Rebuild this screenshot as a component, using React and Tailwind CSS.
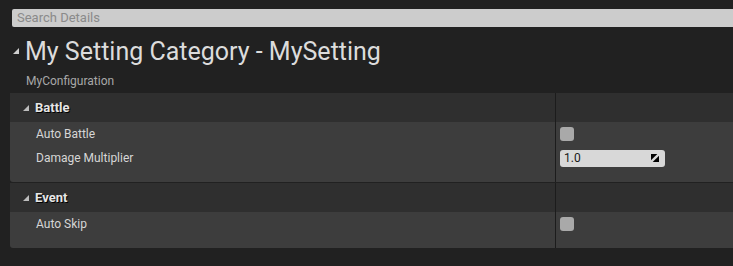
import React from "react";

const Tri = ({ className = "" }) => (
  <svg width="6" height="6" viewBox="0 0 6 6" className={className}>
    <polygon points="6,0 6,6 0,6" fill="currentColor" />
  </svg>
);

const Checkbox = () => (
  <div className="w-[14px] h-[14px] rounded-[3px] bg-[#a9a9a9]" />
);

const SpinBox = () => (
  <div className="w-[105px] h-[17px] rounded-[3px] bg-[#d8d8d8] flex items-center justify-between pl-[4px] pr-[6px]">
    <span className="text-[12px] text-[#1a1a1a] leading-none">1.0</span>
    <svg width="8" height="8" viewBox="0 0 8 8">
      <polygon points="0,0 6.3,0 0,6.3" fill="#000" />
      <polygon points="8,1.7 8,8 1.7,8" fill="#000" />
    </svg>
  </div>
);

const Row = ({ label, children }) => (
  <div className="flex h-[24px]">
    <div className="w-[545px] flex items-center pl-[26px] text-[12px] text-[#d6d6d6]">
      {label}
    </div>
    <div className="w-px bg-[#1c1c1c]" />
    <div className="flex-1 flex items-center pl-[4px]">{children}</div>
  </div>
);

const Category = ({ title, children, padBottom }) => (
  <div>
    <div className="flex h-[29px] bg-[#2f2f2f]">
      <div className="w-[545px] flex items-center pl-[13px] gap-[6px]">
        <Tri className="text-[#bdbdbd]" />
        <span className="text-[13px] font-bold text-[#e6e6e6] [text-shadow:1px_1px_0_#000]">
          {title}
        </span>
      </div>
      <div className="w-px bg-[#1c1c1c]" />
      <div className="flex-1" />
    </div>
    <div className="bg-[#3d3d3d] rounded-bl-[3px]">
      {children}
      <div className="flex" style={{ height: padBottom }}>
        <div className="w-[545px]" />
        <div className="w-px bg-[#1c1c1c]" />
        <div className="flex-1" />
      </div>
    </div>
  </div>
);

export default function App() {
  return (
    <div
      className="w-[733px] h-[266px] bg-[#212121] overflow-hidden"
      style={{ fontFamily: "Roboto, 'Liberation Sans', sans-serif" }}
    >
      <div className="pt-[9px] pl-[12px]">
        <div className="h-[18px] bg-[#cccccc] rounded-l-[2px] flex items-center pl-[5px] text-[13px] text-[#8a8a8a]">
          Search Details
        </div>
      </div>
      <div className="flex items-center h-[28px] mt-[10px] pl-[13px] gap-[6px]">
        <Tri className="text-[#cfcfcf]" />
        <span className="text-[25px] text-[#dcdcdc] leading-none">
          My Setting Category - MySetting
        </span>
      </div>
      <div className="pl-[26px] mt-[6px] h-[20px] flex items-center text-[12px] text-[#a8a8a8]">
        MyConfiguration
      </div>
      <div className="ml-[10px] mt-[2px]">
        <Category title="Battle" padBottom="12px">
          <Row label="Auto Battle">
            <Checkbox />
          </Row>
          <Row label="Damage Multiplier">
            <SpinBox />
          </Row>
        </Category>
        <div className="h-px" />
        <Category title="Event" padBottom="12px">
          <Row label="Auto Skip">
            <Checkbox />
          </Row>
        </Category>
      </div>
    </div>
  );
}
